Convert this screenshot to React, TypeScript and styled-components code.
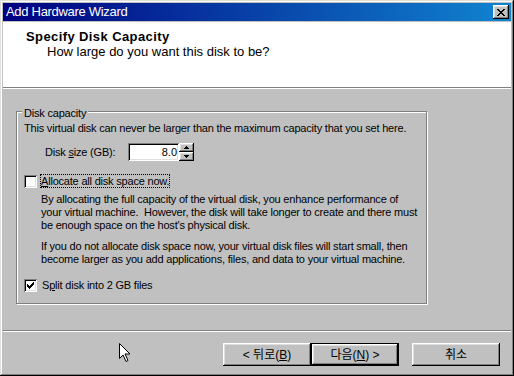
import React from "react";
import styled, { createGlobalStyle } from "styled-components";

const GlobalStyle = createGlobalStyle`
  html, body {
    margin: 0;
    padding: 0;
    background: #c0c0c0;
  }
  body {
    font-family: "Liberation Sans", "Noto Sans CJK KR", Arial, sans-serif;
    color: #000;
  }
`;

const Window = styled.div`
  position: relative;
  box-sizing: border-box;
  width: 514px;
  height: 376px;
  padding: 3px;
  display: flex;
  flex-direction: column;
  background: #c0c0c0;
  box-shadow: inset -1px -1px #000, inset 1px 1px #dfdfdf,
    inset -2px -2px #808080, inset 2px 2px #fff;
`;

const TitleBar = styled.div`
  height: 18px;
  margin-bottom: 1px;
  padding: 0 2px 0 3px;
  display: flex;
  align-items: center;
  justify-content: space-between;
  background: linear-gradient(to right, #000080, #1084d0);
  color: #fff;
  font-size: 13px;
  letter-spacing: -0.3px;
  line-height: 18px;
`;

const CloseButton = styled.div`
  box-sizing: border-box;
  width: 16px;
  height: 14px;
  display: flex;
  align-items: center;
  justify-content: center;
  background: #c0c0c0;
  box-shadow: inset -1px -1px #000, inset 1px 1px #fff,
    inset -2px -2px #808080, inset 2px 2px #dfdfdf;
`;

const Header = styled.div`
  height: 58px;
  padding: 7px 0 0 23px;
  background: #fff;
`;

const HeaderTitle = styled.div`
  font-size: 13px;
  font-weight: bold;
  letter-spacing: 0.4px;
  line-height: 16px;
`;

const HeaderSub = styled.div`
  margin: -1px 0 0 21px;
  font-size: 13px;
  line-height: 16px;
`;

const Divider = styled.div`
  height: 0;
  border-top: 1px solid #808080;
  border-bottom: 1px solid #fff;
`;

const Body = styled.div`
  flex: 1;
  padding: 22px 0 0 13px;
`;

const Group = styled.div`
  position: relative;
  box-sizing: border-box;
  width: 411px;
  height: 193px;
  padding: 10px 0 0 7px;
  display: flex;
  flex-direction: column;
  border: 1px solid #808080;
  box-shadow: inset 1px 1px #fff, 1px 1px #fff;
  font-size: 11px;
  letter-spacing: -0.2px;
  line-height: 13px;
`;

const Legend = styled.span`
  position: absolute;
  top: -5px;
  left: 5px;
  padding: 0 2px;
  background: #c0c0c0;
`;

const Line = styled.div<{ $top?: number; $indent?: number }>`
  margin-top: ${(p) => p.$top ?? 0}px;
  margin-left: ${(p) => p.$indent ?? 0}px;
  white-space: pre;
`;

const Row = styled.div<{ $top: number; $indent?: number }>`
  margin-top: ${(p) => p.$top}px;
  margin-left: ${(p) => p.$indent ?? 0}px;
  display: flex;
  align-items: center;
`;

const FieldLabel = styled.span`
  width: 83px;
`;

const Edit = styled.div`
  box-sizing: border-box;
  width: 51px;
  height: 18px;
  padding: 3px 2px 0 0;
  background: #fff;
  text-align: right;
  letter-spacing: 0;
  box-shadow: inset 1px 1px #808080, inset -1px -1px #fff,
    inset 2px 2px #000, inset -2px -2px #dfdfdf;
`;

const Spinner = styled.div`
  display: flex;
  flex-direction: column;
`;

const SpinButton = styled.div`
  box-sizing: border-box;
  width: 15px;
  height: 9px;
  display: flex;
  align-items: center;
  justify-content: center;
  background: #c0c0c0;
  box-shadow: inset -1px -1px #000, inset 1px 1px #fff,
    inset -2px -2px #808080, inset 2px 2px #dfdfdf;
`;

const CheckBox = styled.div`
  box-sizing: border-box;
  width: 13px;
  height: 13px;
  display: flex;
  align-items: center;
  justify-content: center;
  background: #fff;
  box-shadow: inset 1px 1px #808080, inset -1px -1px #fff,
    inset 2px 2px #000, inset -2px -2px #dfdfdf;
`;

const CheckLabel = styled.span<{ $focused?: boolean }>`
  margin-left: ${(p) => (p.$focused ? 3 : 4)}px;
  padding: 0 1px;
  line-height: 14px;
  outline: ${(p) => (p.$focused ? "1px dotted #000" : "none")};
  outline-offset: -1px;
`;

const Footer = styled.div`
  height: 41px;
  box-sizing: border-box;
  padding: 11px 11px 0 0;
  display: flex;
  justify-content: flex-end;
`;

const Button = styled.div<{ $default?: boolean; $gap?: number }>`
  box-sizing: border-box;
  width: 88px;
  height: 23px;
  margin-left: ${(p) => p.$gap ?? 0}px;
  display: flex;
  align-items: center;
  justify-content: center;
  font-size: 12px;
  line-height: 1;
  background: #c0c0c0;
  border: ${(p) => (p.$default ? "1px solid #000" : "none")};
  box-shadow: inset -1px -1px #000, inset 1px 1px #fff,
    inset -2px -2px #808080, inset 2px 2px #dfdfdf;
`;

const Cursor = styled.svg`
  position: absolute;
  left: 118px;
  top: 342px;
`;

const Arrow = ({ up }: { up?: boolean }) => (
  <svg width="5" height="3" viewBox="0 0 5 3" shapeRendering="crispEdges">
    <path d={up ? "M2 0h1v1h1v1h1v1H0V2h1V1h1z" : "M0 0h5v1H4v1H3v1H2V2H1V1H0z"} fill="#000" />
  </svg>
);

export default function App() {
  return (
    <>
      <GlobalStyle />
      <Window>
        <TitleBar>
          <span>Add Hardware Wizard</span>
          <CloseButton>
            <svg width="8" height="7" viewBox="0 0 8 7" shapeRendering="crispEdges">
              <path
                d="M0 0h2v1h1v1h2V1h1V0h2v1H7v1H6v1H5v1h1v1h1v1h1v1H6V6H5V5H3v1H2v1H0V6h1V5h1V4h1V3H2V2H1V1H0z"
                fill="#000"
              />
            </svg>
          </CloseButton>
        </TitleBar>

        <Header>
          <HeaderTitle>Specify Disk Capacity</HeaderTitle>
          <HeaderSub>How large do you want this disk to be?</HeaderSub>
        </Header>
        <Divider />

        <Body>
          <Group>
            <Legend>Disk capacity</Legend>
            <Line>This virtual disk can never be larger than the maximum capacity that you set here.</Line>
            <Row $top={8} $indent={21}>
              <FieldLabel>
                Disk <u>s</u>ize (GB):
              </FieldLabel>
              <Edit>8.0</Edit>
              <Spinner>
                <SpinButton>
                  <Arrow up />
                </SpinButton>
                <SpinButton>
                  <Arrow />
                </SpinButton>
              </Spinner>
            </Row>
            <Row $top={13}>
              <CheckBox />
              <CheckLabel $focused>
                <u>A</u>llocate all disk space now.
              </CheckLabel>
            </Row>
            <Line $top={5} $indent={17}>
              By allocating the full capacity of the virtual disk, you enhance performance of
              {"\n"}your virtual machine.  However, the disk will take longer to create and there must
              {"\n"}be enough space on the host's physical disk.
            </Line>
            <Line $top={8} $indent={17}>
              If you do not allocate disk space now, your virtual disk files will start small, then
              {"\n"}become larger as you add applications, files, and data to your virtual machine.
            </Line>
            <Row $top={12}>
              <CheckBox>
                <svg width="7" height="7" viewBox="0 0 7 7" shapeRendering="crispEdges">
                  <path d="M6 0h1v3H6v1H5v1H4v1H3v1H2V6H1V5H0V2h1v1h1v1h1V3h1V2h1V1h1z" fill="#000" />
                </svg>
              </CheckBox>
              <CheckLabel>
                S<u>p</u>lit disk into 2 GB files
              </CheckLabel>
            </Row>
          </Group>
        </Body>

        <Divider />
        <Footer>
          <Button>
            &lt; 뒤로(<u>B</u>)
          </Button>
          <Button $default>
            다음(<u>N</u>) &gt;
          </Button>
          <Button $gap={13}>취소</Button>
        </Footer>

        <Cursor width="13" height="21" viewBox="0 0 13 21">
          <path
            d="M1.5 1.5v15l3.5-3.5 3 6.5 2-1-3-6.5h5z"
            fill="#fff"
            stroke="#000"
            strokeWidth="1"
            strokeLinejoin="miter"
          />
        </Cursor>
      </Window>
    </>
  );
}
